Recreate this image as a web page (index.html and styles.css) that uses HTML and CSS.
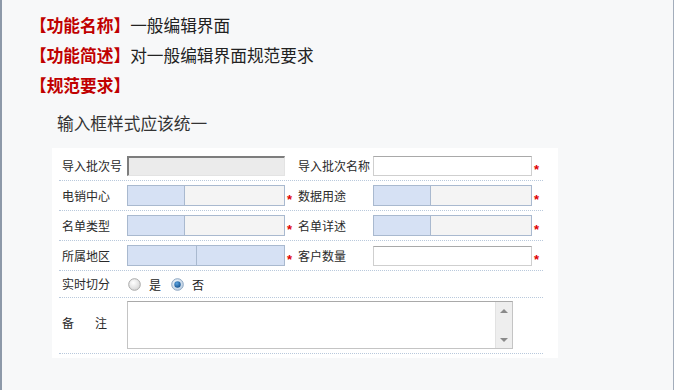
FILE: index.html
```html
<!DOCTYPE html>
<html lang="zh">
<head>
<meta charset="utf-8">
<title>一般编辑界面</title>
<link rel="stylesheet" href="styles.css">
</head>
<body>
<div class="page">
  <div class="titles">
    <div class="line"><span class="key">【功能名称】</span>一般编辑界面</div>
    <div class="line"><span class="key">【功能简述】</span>对一般编辑界面规范要求</div>
    <div class="line"><span class="key">【规范要求】</span></div>
  </div>
  <div class="subtitle">输入框样式应该统一</div>
  <div class="panel">
    <div class="row">
      <div class="label">导入批次号</div>
      <div class="field"><div class="box disabled w-left"></div></div>
      <div class="label right">导入批次名称</div>
      <div class="field"><div class="box plain w-right"></div><span class="req">*</span></div>
    </div>
    <div class="row">
      <div class="label">电销中心</div>
      <div class="field"><div class="box split w-left"><span class="code"></span><span class="name"></span></div><span class="req">*</span></div>
      <div class="label right">数据用途</div>
      <div class="field"><div class="box split w-right"><span class="code"></span><span class="name"></span></div><span class="req">*</span></div>
    </div>
    <div class="row">
      <div class="label">名单类型</div>
      <div class="field"><div class="box split w-left"><span class="code"></span><span class="name"></span></div><span class="req">*</span></div>
      <div class="label right">名单详述</div>
      <div class="field"><div class="box split w-right"><span class="code"></span><span class="name"></span></div><span class="req">*</span></div>
    </div>
    <div class="row">
      <div class="label">所属地区</div>
      <div class="field"><div class="box split both w-left"><span class="code wide"></span><span class="name"></span></div><span class="req">*</span></div>
      <div class="label right">客户数量</div>
      <div class="field"><div class="box plain w-right"></div><span class="req">*</span></div>
    </div>
    <div class="row short">
      <div class="label">实时切分</div>
      <div class="field span3 radios">
        <svg class="radio" width="13" height="13" viewBox="0 0 13 13">
          <defs>
            <radialGradient id="rg1" cx="0.4" cy="0.35" r="0.7">
              <stop offset="0" stop-color="#ffffff"/>
              <stop offset="1" stop-color="#d4d4d4"/>
            </radialGradient>
          </defs>
          <circle cx="6.5" cy="6.5" r="5.8" fill="url(#rg1)" stroke="#a9a9a9" stroke-width="1"/>
        </svg>
        <span class="opt">是</span>
        <svg class="radio" width="13" height="13" viewBox="0 0 13 13">
          <defs>
            <radialGradient id="rg2" cx="0.4" cy="0.35" r="0.7">
              <stop offset="0" stop-color="#f4f8fc"/>
              <stop offset="1" stop-color="#b9cde2"/>
            </radialGradient>
            <radialGradient id="rg3" cx="0.4" cy="0.35" r="0.7">
              <stop offset="0" stop-color="#5aa3e0"/>
              <stop offset="1" stop-color="#124f8c"/>
            </radialGradient>
          </defs>
          <circle cx="6.5" cy="6.5" r="5.8" fill="url(#rg2)" stroke="#8ea7c2" stroke-width="1"/>
          <circle cx="6.5" cy="6.5" r="3.2" fill="url(#rg3)"/>
        </svg>
        <span class="opt">否</span>
      </div>
    </div>
    <div class="row tall">
      <div class="label memo-label"><span>备</span><span>注</span></div>
      <div class="field span3">
        <div class="memo">
          <div class="memo-text"></div>
          <div class="scroll">
            <span class="arrow up"></span>
            <span class="arrow down"></span>
          </div>
        </div>
      </div>
    </div>
  </div>
</div>
</body>
</html>
```
FILE: styles.css
```css
html, body {
  margin: 0;
  padding: 0;
}
body {
  background: #f7f8f9;
  font-family: "Noto Sans CJK SC", "Noto Sans", sans-serif;
  color: #222;
  height: 390px;
  box-sizing: border-box;
  border-left: 2px solid #8d99a9;
  border-right: 1px solid #a3adbb;
}
.page {
  padding: 10px 0 0 28px;
}
.titles {
  font-size: 16.7px;
  line-height: 30px;
}
.key {
  color: #c00000;
  font-weight: bold;
}
.subtitle {
  font-size: 16.7px;
  line-height: 30px;
  margin: 8px 0 0 27px;
  color: #333;
}
.panel {
  margin: 10px 0 0 22px;
  width: 506px;
  box-sizing: border-box;
  background: #ffffff;
  padding: 3px 15px 4px 7px;
}
.row {
  display: grid;
  grid-template-columns: 68px 171px 75px 170px;
  height: 29px;
  border-bottom: 1px dotted #b9c9dc;
  align-items: center;
}
.row.short {
  height: 26px;
}
.row.tall {
  height: 52px;
  padding-top: 3px;
  align-items: start;
}
.label {
  font-size: 12px;
  color: #2a2a2a;
  padding-left: 3px;
  line-height: 16px;
  white-space: nowrap;
}
.label.right {
  padding-left: 0;
}
.field {
  display: flex;
  align-items: center;
}
.span3 {
  grid-column: 2 / 5;
}
.box {
  box-sizing: border-box;
  height: 21px;
  display: flex;
}
.w-left {
  width: 158px;
}
.w-right {
  width: 159px;
}
.disabled {
  height: 20px;
  background: #ebebeb;
  border-top: 2px solid #7d7d7d;
  border-left: 2px solid #7d7d7d;
  border-right: 1px solid #e3e3e3;
  border-bottom: 1px solid #e3e3e3;
}
.plain {
  height: 20px;
  background: #ffffff;
  border: 1px solid #cfcfcf;
  border-top-color: #a9a9a9;
}
.split {
  border: 1px solid #a9b9cf;
  background: #f4f4f4;
}
.split .code {
  width: 56px;
  background: #d6e1f4;
  border-right: 1px solid #a9b9cf;
}
.split .code.wide {
  width: 68px;
}
.split .name {
  flex: 1;
}
.split.both {
  background: #d6e1f4;
}
.req {
  color: #e00000;
  font-size: 13px;
  line-height: 10px;
  margin: 9px 0 0 2px;
  font-family: "Liberation Sans", sans-serif;
  font-weight: bold;
}
.radios {
  padding-top: 1px;
}
.radio {
  display: block;
  margin-left: 1px;
}
.opt {
  font-size: 12px;
  margin: 0 9px 0 8px;
  color: #222;
}
.memo-label {
  display: flex;
  gap: 21px;
  padding-top: 14px;
}
.memo {
  width: 386px;
  height: 48px;
  box-sizing: border-box;
  border: 1px solid #c4c4c4;
  border-top-color: #a9a9a9;
  display: flex;
  background: #fff;
}
.memo-text {
  flex: 1;
}
.scroll {
  width: 16px;
  background: #eeeeee;
  border-left: 1px solid #e2e2e2;
  display: flex;
  flex-direction: column;
  justify-content: space-between;
  align-items: center;
  padding: 7px 0 6px;
}
.arrow {
  width: 0;
  height: 0;
  border-left: 4px solid transparent;
  border-right: 4px solid transparent;
}
.arrow.up {
  border-bottom: 4px solid #8a8a8a;
}
.arrow.down {
  border-top: 4px solid #8a8a8a;
}
```
